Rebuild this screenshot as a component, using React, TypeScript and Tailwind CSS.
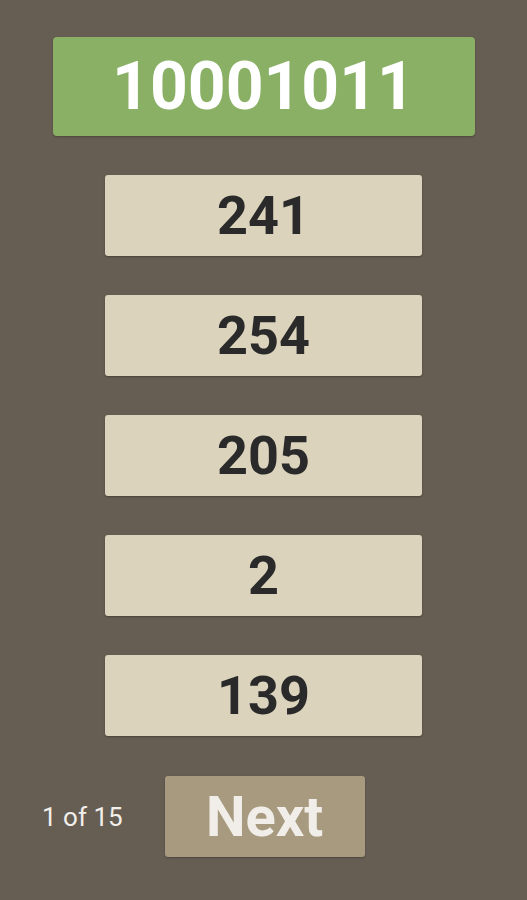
import React from "react";

const values = ["241", "254", "205", "2", "139"];

const App: React.FC = () => {
  return (
    <div className="bg-[#665e53] flex flex-col items-center h-[900px] w-full pt-[37px] font-['Roboto',sans-serif]">
      <div className="bg-[#8ab066] flex items-center justify-center h-[99px] w-[422px] rounded-[4px] shadow-[0_1px_2px_rgba(0,0,0,0.25)]">
        <span className="text-white text-[66px] font-bold leading-none">10001011</span>
      </div>
      <div className="flex flex-col gap-[39px] mt-[39px]">
        {values.map((v) => (
          <div
            key={v}
            className="bg-[#dcd3bc] flex items-center justify-center h-[81px] w-[317px] rounded-[3px] shadow-[0_1px_2px_rgba(0,0,0,0.3)]"
          >
            <span className="text-[#2a2a2a] text-[54px] font-bold leading-none">{v}</span>
          </div>
        ))}
      </div>
      <div className="flex flex-row items-center w-full mt-[40px] pl-[42px]">
        <span className="text-[#f2efea] text-[26px] leading-none">1 of 15</span>
        <button className="bg-[#a89a7e] flex items-center justify-center h-[81px] w-[200px] ml-[42px] rounded-[3px] shadow-[0_1px_2px_rgba(0,0,0,0.25)]">
          <span className="text-[#f1eeea] text-[56px] font-bold leading-none">Next</span>
        </button>
      </div>
    </div>
  );
};

export default App;
